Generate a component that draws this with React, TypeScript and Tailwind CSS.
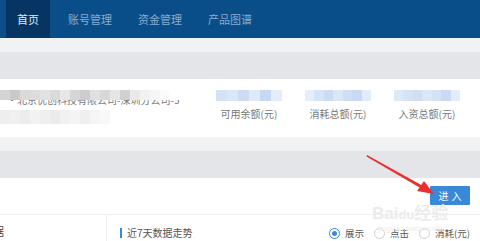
import React from "react";

const tabs = ["账号管理", "资金管理", "产品图谱"];

// mosaic blur cells (the screenshot has pixelated values)
const topGray = ["#d4d4d4", "#c9c9c9", "#d9d9d9", "#dcdcdc", "#e2e2e2", "#dadada", "#e7e7e7", "#d6d6d6", "#cdcdcd", "#e0e0e0", "#d8d8d8", "#e6e6e6", "#d0d0d0", "#e9e9e9", "#f1f1f1", "#f6f6f6", "#fbfbfb"];
const lowGray = ["#eeeeee", "#f0f0f0", "#ececec", "#f2f2f2", "#efefef", "#ebebeb", "#f1f1f1", "#f4f4f4", "#efefef", "#f5f5f5", "#f8f8f8"];
const blues = [
  ["#d4e2f6", "#dbe7f7", "#cddcf4", "#dfe9f8", "#c7d8f3", "#e5edf9"],
  ["#e6eef9", "#d5e3f6", "#cbdbf3", "#dbe6f7", "#d0def5", "#c8d9f3", "#e3ecf9"],
  ["#dde8f8", "#d6e3f6", "#d1dff5", "#dbe6f7", "#d5e2f6", "#cadaf4", "#e4ecf9"],
];

const stats = ["可用余额(元)", "消耗总额(元)", "入资总额(元)"];

function Radio({ label, checked }: { label: string; checked?: boolean }) {
  return (
    <div className="flex items-center gap-[5px]">
      <span
        className={`w-[11px] h-[11px] rounded-full border flex items-center justify-center ${
          checked ? "border-[#3a87d6]" : "border-[#cfcfcf]"
        }`}
      >
        {checked && <span className="w-[5px] h-[5px] rounded-full bg-[#3a87d6]" />}
      </span>
      <span className="text-[9.5px] text-[#555]">{label}</span>
    </div>
  );
}

export default function App() {
  return (
    <div
      className="relative w-[480px] h-[241px] overflow-hidden bg-[#e4e5e9]"
      style={{ fontFamily: '"Noto Sans CJK SC", "Noto Sans", sans-serif' }}
    >
      {/* top nav */}
      <nav className="h-[38px] bg-[#0a4e89] flex pl-[6px]">
        <div className="h-full bg-[#063563] px-[11px] flex items-center text-[11px] text-[#e3eaf2]">
          首页
        </div>
        <div className="flex ml-[5px]">
          {tabs.map((t) => (
            <div key={t} className="h-full px-[13px] flex items-center text-[11px] text-[#88abcf]">
              {t}
            </div>
          ))}
        </div>
      </nav>

      <div className="h-[14px] bg-[#f1f2f4]" />
      <div className="h-[27px]" />

      {/* account panel */}
      <div className="h-[58px] bg-white flex">
        <div className="w-[200px] pt-[11px]">
          <div className="flex h-[10px] w-[170px]">
            {topGray.map((c, i) => (
              <div key={i} className="flex-1" style={{ backgroundColor: c }} />
            ))}
          </div>
          <div className="h-[5px] overflow-hidden">
            <div className="mt-[-6px] ml-[7px] text-[10px] leading-[11px] text-[#777] whitespace-nowrap">
              ·北京优创科技有限公司-深圳分公司-5
            </div>
          </div>
          <div className="flex h-[14px] w-[110px] mt-[5px]">
            {lowGray.map((c, i) => (
              <div key={i} className="flex-1" style={{ backgroundColor: c }} />
            ))}
          </div>
        </div>
        <div className="flex gap-[19px] ml-[14px] pt-[11px]">
          {stats.map((s, i) => (
            <div key={s} className="w-[70px] flex flex-col items-center">
              <div className="flex h-[11px] w-[66px]">
                {blues[i].map((c, j) => (
                  <div key={j} className="flex-1" style={{ backgroundColor: c }} />
                ))}
              </div>
              <div className="mt-[6px] text-[10px] leading-[14px] text-[#777] whitespace-nowrap">{s}</div>
            </div>
          ))}
        </div>
      </div>

      <div className="h-[14px] bg-[#f1f2f4]" />
      <div className="h-[27px]" />

      {/* product panel */}
      <div className="bg-white">
        <div className="h-[37px] flex justify-end items-start pt-[8px] pr-[10px] border-b border-[#efefef]">
          <button className="w-[40px] h-[19px] bg-[#3a88d8] text-white text-[10px] tracking-[3px] pl-[3px] rounded-[1px]">
            进入
          </button>
        </div>
        <div className="h-[30px] flex">
          <div className="w-[107px] border-r border-[#efefef] pt-[10px] overflow-hidden">
            <div className="ml-[-18px] text-[11px] leading-[12px] text-[#444] whitespace-nowrap">数据</div>
          </div>
          <div className="flex-1 flex items-start pt-[12px] pl-[13px]">
            <div className="flex items-center gap-[5px]">
              <span className="w-[2px] h-[10px] bg-[#3a88d8]" />
              <span className="text-[10px] leading-[12px] text-[#555]">近7天数据走势</span>
            </div>
            <div className="ml-auto mr-[10px] flex gap-[10px] mt-[-1px]">
              <Radio label="展示" checked />
              <Radio label="点击" />
              <Radio label="消耗(元)" />
            </div>
          </div>
        </div>
      </div>

      {/* baidu watermark */}
      <div className="absolute left-[372px] top-[204px] flex flex-col items-center text-[#ececec] pointer-events-none">
        <div className="text-[17px] leading-[20px] font-bold" style={{ fontFamily: '"Liberation Sans", "Noto Sans CJK SC", sans-serif' }}>
          Bai<span className="text-[13px]">du</span>经验
        </div>
        <div className="text-[8px] leading-[8px]" style={{ fontFamily: '"Liberation Sans", sans-serif' }}>
          jingyan.baidu.com
        </div>
      </div>

      {/* red annotation arrow */}
      <svg className="absolute left-0 top-0 pointer-events-none" width="480" height="241">
        <polygon points="367,155 424,186.5 423,189.5 366.5,156.5" fill="#e8302e" />
        <polygon points="434,194 417,191 424,181" fill="#e8302e" />
      </svg>
    </div>
  );
}
